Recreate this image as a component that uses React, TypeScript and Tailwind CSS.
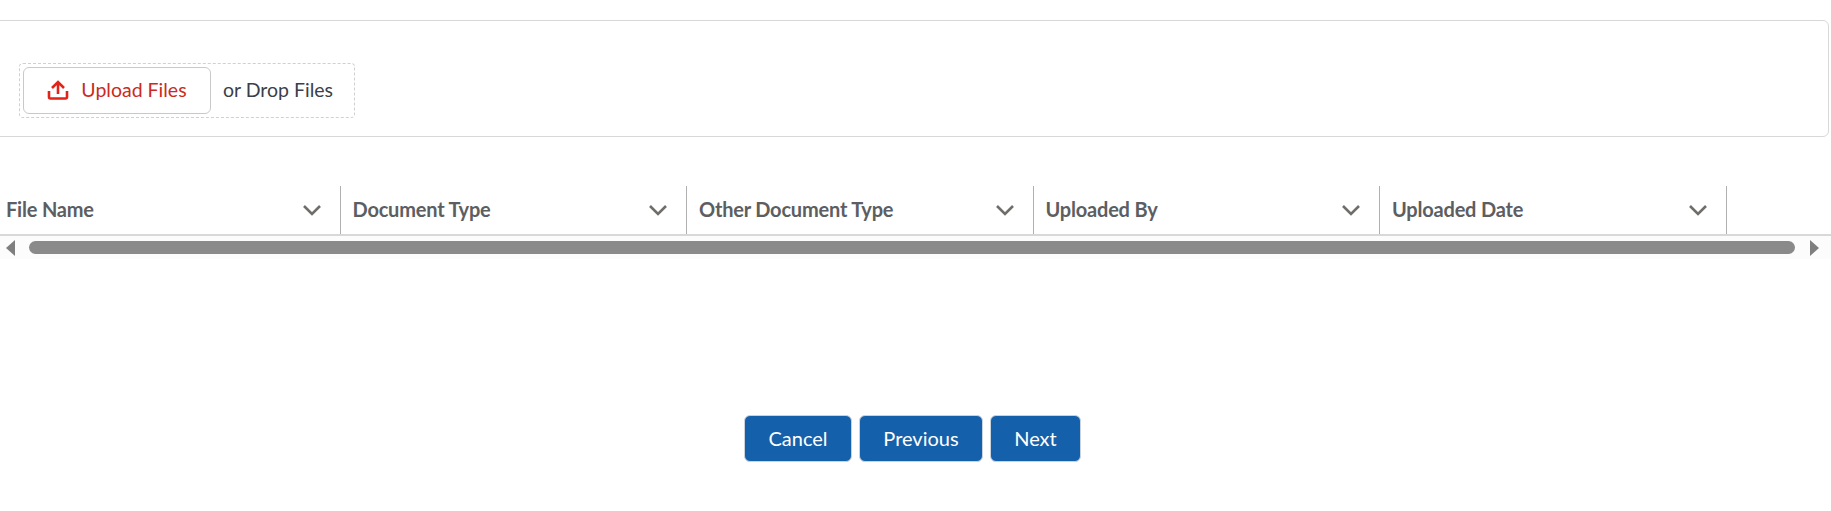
import React from "react";

const cols = ["File Name", "Document Type", "Other Document Type", "Uploaded By", "Uploaded Date"];

function Chevron() {
  return (
    <svg width="20" height="12" viewBox="0 0 20 12" className="shrink-0">
      <path d="M2 2 L10 10 L18 2" fill="none" stroke="#706e6b" strokeWidth="2.6" />
    </svg>
  );
}

function UploadIcon() {
  return (
    <svg width="22" height="20" viewBox="0 0 22 20" className="shrink-0">
      <path d="M11 2 V14 M5 8 L11 2 L17 8" fill="none" stroke="#e2231a" strokeWidth="2.6" />
      <path d="M2 11 V17 Q2 18.5 3.5 18.5 H18.5 Q20 18.5 20 17 V11" fill="none" stroke="#e2231a" strokeWidth="2.6" />
    </svg>
  );
}

export default function App() {
  return (
    <div className="w-[1831px] h-[511px] overflow-hidden bg-white pt-5 pr-[2px] font-['Lato','Open_Sans',sans-serif]">
      <section className="h-[117px] -ml-2 border border-[#d8d8d8] rounded-md flex items-center pl-[26px] pt-[23px]">
        <div className="flex items-center h-[55px] w-[336px] p-[3px] border border-dashed border-[#d0d0d0] rounded">
          <button className="flex items-center justify-center gap-[12px] w-[188px] h-[47px] bg-white border border-[#c9c9c9] rounded-md text-[#cc2a1c] text-[19.5px]">
            <UploadIcon />
            Upload Files
          </button>
          <span className="ml-3 text-[19.5px] text-[#3a3f4b]">or Drop Files</span>
        </div>
      </section>

      <div className="mt-[49px] -ml-[6px] -mr-[2px]">
        <div className="flex h-[50px] border-b-2 border-[#d8d8d8]">
          {cols.map((c) => (
            <div key={c} className="w-[346.5px] shrink-0 flex items-center justify-between pl-3 pr-[18px] border-r border-[#b0b0b0]">
              <span className="text-[20px] font-bold text-[#5c5e62] tracking-[-0.2px] -mt-[3px]">{c}</span>
              <Chevron />
            </div>
          ))}
        </div>
      </div>

      <div className="flex items-center h-[23px] -mr-[2px] bg-[#fcfcfc]">
        <div className="ml-[6px] w-0 h-0 border-y-[8px] border-y-transparent border-r-[9px] border-r-[#7f7f7f]" />
        <div className="ml-[14px] w-[1766px] h-[13px] rounded-full bg-[#8a8a8a]" />
        <div className="ml-[15px] w-0 h-0 border-y-[8px] border-y-transparent border-l-[9px] border-l-[#7f7f7f]" />
      </div>

      <div className="mt-[156px] flex justify-center gap-[7px] pr-[4px]">
        <button className="w-[108px] h-[47px] pb-[2px] rounded-md bg-[#1560aa] border border-[#c9d3dd] text-white text-[20px]">Cancel</button>
        <button className="w-[124px] h-[47px] pb-[2px] rounded-md bg-[#1560aa] border border-[#c9d3dd] text-white text-[20px]">Previous</button>
        <button className="w-[91px] h-[47px] pb-[2px] rounded-md bg-[#1560aa] border border-[#c9d3dd] text-white text-[20px]">Next</button>
      </div>
    </div>
  );
}
